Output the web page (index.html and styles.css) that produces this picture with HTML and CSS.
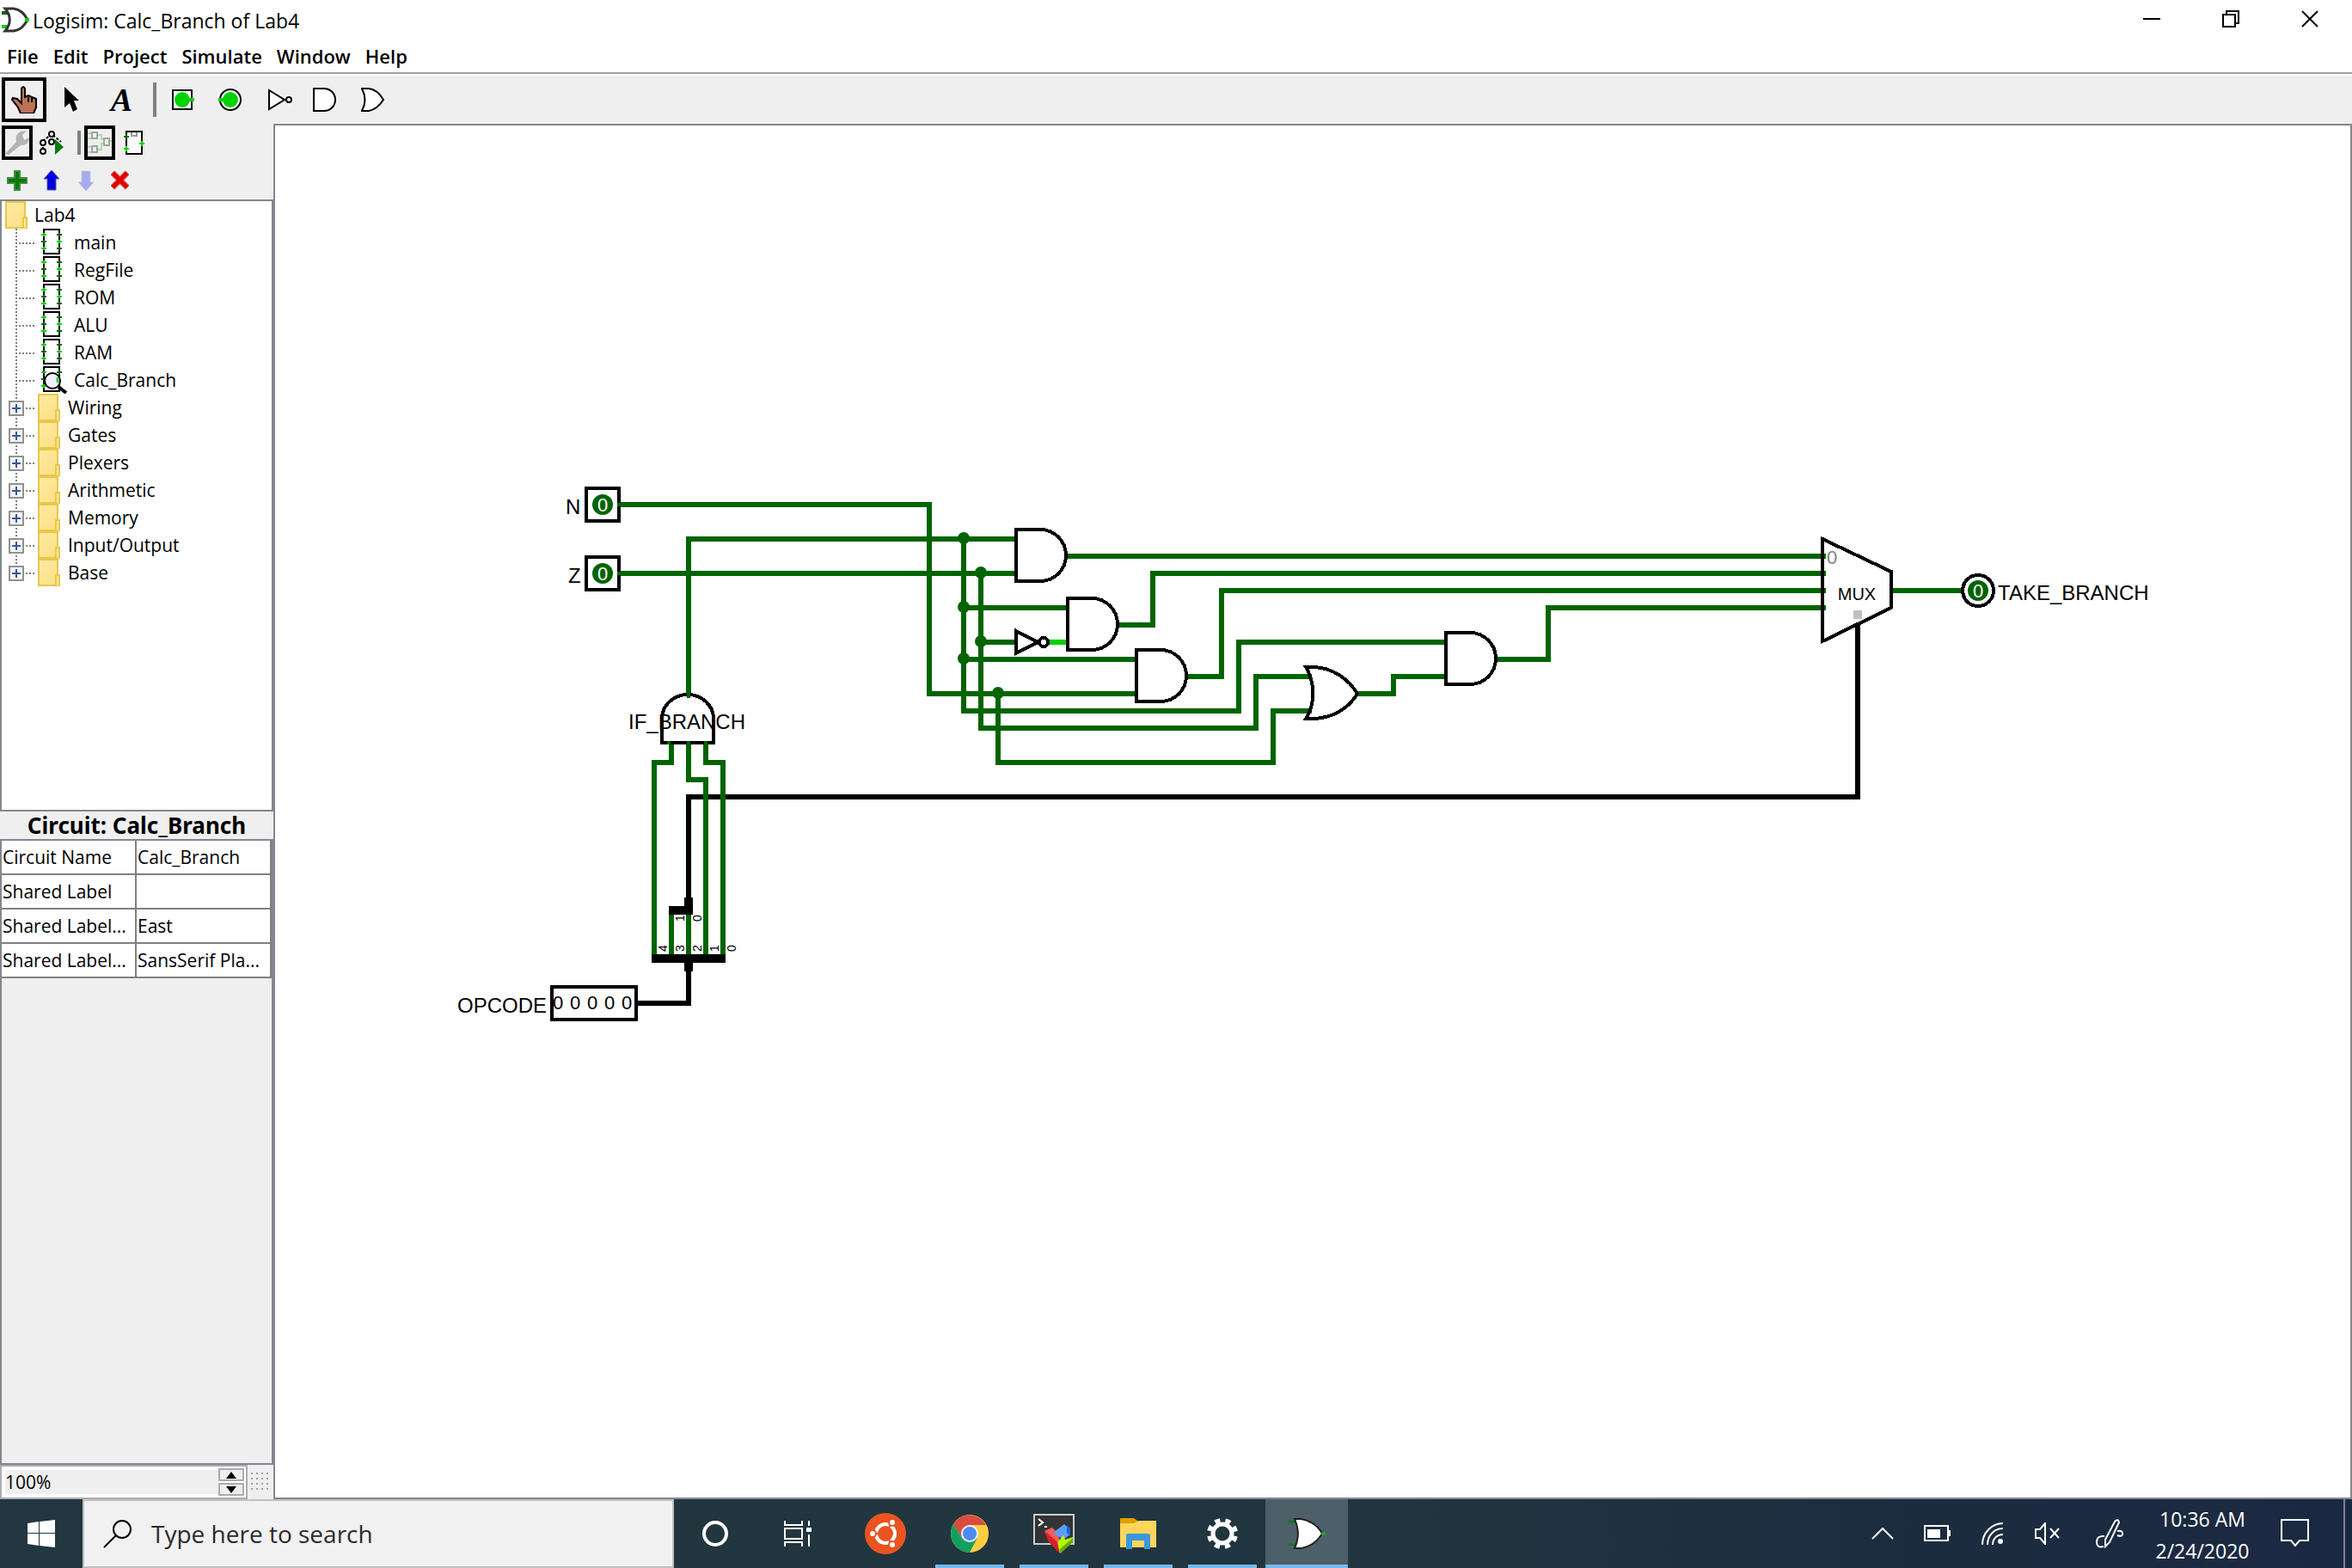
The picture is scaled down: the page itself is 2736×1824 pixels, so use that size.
FILE: index.html
```html
<!DOCTYPE html>
<html lang="en">
<head>
<meta charset="utf-8">
<title>Logisim: Calc_Branch of Lab4</title>
<link rel="stylesheet" href="styles.css">
</head>
<body>
<svg class="defs" aria-hidden="true">
  <defs>
    <linearGradient id="folder-fill" x1="0" y1="0" x2="1" y2="1">
      <stop offset="0" stop-color="#ffeaa5"/><stop offset="1" stop-color="#fcdf80"/>
    </linearGradient>
    <symbol id="leaf-line" viewBox="0 0 44 32">
      <path d="M19 0V32M22 17H41" fill="none" stroke="#808080" stroke-width="2" stroke-dasharray="2 2"/>
    </symbol>
    <symbol id="node-line" viewBox="0 0 44 32">
      <path d="M19 0V32M30 17H41" fill="none" stroke="#808080" stroke-width="2" stroke-dasharray="2 2"/>
      <path d="M11 9H27V25H11Z" fill="#f4f4f4" stroke="#919191" stroke-width="2"/>
      <path d="M14 17H24M19 12V22" stroke="#3a559b" stroke-width="2"/>
    </symbol>
    <symbol id="folder" viewBox="0 0 28 32">
      <path d="M1 1H23V19H25V31H1Z" fill="url(#folder-fill)" stroke="#e9c64b" stroke-width="2"/>
      <path d="M21 31V19H25V31" fill="#ffe79a" stroke="#e9c64b" stroke-width="2"/>
    </symbol>
    <symbol id="chip" viewBox="0 0 28 32">
      <path d="M7 1H25V29H7Z" fill="#fff" stroke="#000" stroke-width="2"/>
      <path d="M4 7H10M7 5V9M4 23H10M7 21V25M22 15H28M25 13V17" stroke="#00d200" stroke-width="2"/>
      <path d="M4 15H10M7 13V17M22 7H28M25 5V9M22 23H28M25 21V25" stroke="#006400" stroke-width="2"/>
    </symbol>
    <symbol id="chip-open" viewBox="0 0 36 32">
      <path d="M7 1H25V29H7Z" fill="#fff" stroke="#000" stroke-width="2"/>
      <path d="M4 7H10M4 23H10M7 21V25" stroke="#00d200" stroke-width="2"/>
      <path d="M4 15H10M22 7H28M25 5V9" stroke="#006400" stroke-width="2"/>
      <circle cx="17" cy="17" r="9" fill="#f0f0ff" stroke="#000" stroke-width="2"/>
      <path d="M23 13V19" stroke="#33c94f" stroke-width="3"/>
      <path d="M24 24L33 31" stroke="#000" stroke-width="4"/>
    </symbol>
    <path id="and-gate" d="M-31 -31h-28v60h28a30 30 0 0 0 0 -60z"/>
  </defs>
</svg>

<header class="titlebar">
  <svg class="app-icon" width="36" height="32" viewBox="0 0 36 32">
    <path d="M2 7H12" stroke="#006400" stroke-width="4"/><path d="M2 23H12" stroke="#00d200" stroke-width="4"/>
    <path d="M6 2H16C24 3 29 9 32 15C28 22 24 27 16 28H6C13 20 13 10 6 2Z" fill="#fff" stroke="#333" stroke-width="3"/>
    <path d="M29 15H34" stroke="#00d200" stroke-width="4"/>
  </svg>
  <h1 class="title">Logisim: Calc_Branch of Lab4</h1>
  <div class="window-buttons">
    <button class="window-button" aria-label="Minimize"><svg width="20" height="20"><path d="M0 10H20" stroke="#000" stroke-width="2"/></svg></button>
    <button class="window-button" aria-label="Restore"><svg width="20" height="20"><path d="M1 5H15V19H1ZM5 5V1H19V15H15" fill="none" stroke="#000" stroke-width="2"/></svg></button>
    <button class="window-button" aria-label="Close"><svg width="20" height="20"><path d="M1 1L19 19M19 1L1 19" stroke="#000" stroke-width="2"/></svg></button>
  </div>
</header>

<nav class="menubar">
  <button class="menu">File</button><button class="menu">Edit</button><button class="menu">Project</button><button class="menu">Simulate</button><button class="menu">Window</button><button class="menu">Help</button>
</nav>

<div class="toolbar" role="toolbar">
  <button class="tool selected" aria-label="Poke"><svg width="32" height="32">
    <path d="M3 14L8 15L13 20V3Q15 -1 17 3V13L21 11L25 13L30 15V25L27 32H12L9 25L2 16Z" fill="#bd7257" stroke="#000" stroke-width="2"/>
    <path d="M21 13V19M25 14V19" stroke="#000" stroke-width="2"/></svg></button>
  <button class="tool" aria-label="Edit"><svg width="32" height="32"><path d="M7 1L24 17H18L22 27L17 30L13 20L7 25Z" fill="#000" stroke="#fff" stroke-width="2" paint-order="stroke"/></svg></button>
  <button class="tool letter">A</button>
  <span class="divider"></span>
  <button class="tool" aria-label="Input pin"><svg width="32" height="32"><path d="M5 5H27V27H5Z" fill="#fff" stroke="#000" stroke-width="2"/><circle cx="16" cy="16" r="9" fill="#00d200"/><path d="M23 16H30" stroke="#00d200" stroke-width="4"/></svg></button>
  <button class="tool" aria-label="Output pin"><svg width="32" height="32"><circle cx="16" cy="16" r="12" fill="#fff" stroke="#000" stroke-width="2"/><circle cx="16" cy="16" r="9" fill="#00d200"/><path d="M2 16H9" stroke="#00d200" stroke-width="4"/></svg></button>
  <button class="tool" aria-label="NOT gate"><svg width="32" height="32"><path d="M5 5L23 16L5 27Z" fill="#fff" stroke="#000" stroke-width="2"/><circle cx="28" cy="16" r="3" fill="#fff" stroke="#000" stroke-width="2"/></svg></button>
  <button class="tool" aria-label="AND gate"><svg width="32" height="32"><path d="M1 3H13A13 13 0 0 1 13 29H1Z" fill="#fff" stroke="#000" stroke-width="2"/></svg></button>
  <button class="tool" aria-label="OR gate"><svg width="32" height="32"><path d="M1 3H9Q19 4 26 16Q19 27 9 29H1Q8 16 1 3Z" fill="#fff" stroke="#000" stroke-width="2"/></svg></button>
</div>

<main class="workspace">
  <aside class="sidebar">
    <div class="strip" role="toolbar">
      <button class="mini selected" aria-label="Show projects"><svg width="28" height="28"><path d="M0 27L13 13Q11 4 18 1L25 0L20 5L22 11L28 8Q28 17 18 17L4 28Z" fill="#b4b4b4"/></svg></button>
      <button class="mini" aria-label="Show simulation"><svg width="28" height="28"><path d="M4 12L14 4L25 13M14 5V12M4 14V22" fill="none" stroke="#000" stroke-width="2" stroke-dasharray="3 2"/><g fill="#fff" stroke="#000" stroke-width="2"><circle cx="14" cy="4" r="3"/><circle cx="4" cy="14" r="3"/><circle cx="14" cy="13" r="3"/><circle cx="4" cy="24" r="3"/></g><path d="M18 10L28 19L18 28Z" fill="#0a780a"/></svg></button>
      <span class="divider small"></span>
      <button class="mini selected" aria-label="Edit layout"><svg width="28" height="28"><path d="M0 3H6M0 9H6M0 19H6M0 25H6M12 5H16V10H20M12 22H16V15H20M26 12H28" fill="none" stroke="#a6dfa6" stroke-width="2"/><path d="M5 2H11V9H5ZM5 18H11V25H5ZM19 9H25V17H19Z" fill="#efefef" stroke="#a3a3a3" stroke-width="2"/></svg></button>
      <button class="mini" aria-label="Edit appearance"><svg width="28" height="28"><path d="M5 1H23V27H5Z" fill="#fff" stroke="#000" stroke-width="2"/><path d="M11 2V6H17V2" fill="none" stroke="#999" stroke-width="2"/><path d="M2 7H8M5 5V9" stroke="#006400" stroke-width="2"/><path d="M2 21H8M5 18V24M20 15H26M23 12V18" stroke="#00d200" stroke-width="2"/></svg></button>
    </div>
    <div class="strip" role="toolbar">
      <button class="mini" aria-label="Add circuit"><svg width="24" height="24"><path d="M9 1H15V9H23V15H15V23H9V15H1V9H9Z" fill="#0a780a" stroke="#3f8c3f" stroke-width="2"/></svg></button>
      <button class="mini" aria-label="Move up"><svg width="24" height="24"><path d="M12 0L21 10H17V23H7V10H3Z" fill="#0000e0" stroke="#5656a8"/></svg></button>
      <button class="mini" aria-label="Move down"><svg width="24" height="24"><path d="M12 24L21 14H17V1H7V14H3Z" fill="#a8a8ee" stroke="#c8c8e0"/></svg></button>
      <button class="mini" aria-label="Remove circuit"><svg width="24" height="24"><path d="M3 3L20 20M20 3L3 20" stroke="#d66" stroke-width="7"/><path d="M3 3L20 20M20 3L3 20" stroke="#e00000" stroke-width="5"/></svg></button>
    </div>

    <section class="tree">
      <div class="node root"><svg width="28" height="32"><use href="#folder"/></svg><span class="root-name">Lab4</span></div>
      <ul class="branch">
        <li class="node"><svg width="44" height="32"><use href="#leaf-line"/></svg><svg width="28" height="32"><use href="#chip"/></svg><span class="circuit">main</span></li>
        <li class="node"><svg width="44" height="32"><use href="#leaf-line"/></svg><svg width="28" height="32"><use href="#chip"/></svg><span class="circuit">RegFile</span></li>
        <li class="node"><svg width="44" height="32"><use href="#leaf-line"/></svg><svg width="28" height="32"><use href="#chip"/></svg><span class="circuit">ROM</span></li>
        <li class="node"><svg width="44" height="32"><use href="#leaf-line"/></svg><svg width="28" height="32"><use href="#chip"/></svg><span class="circuit">ALU</span></li>
        <li class="node"><svg width="44" height="32"><use href="#leaf-line"/></svg><svg width="28" height="32"><use href="#chip"/></svg><span class="circuit">RAM</span></li>
        <li class="node"><svg width="44" height="32"><use href="#leaf-line"/></svg><svg class="open" width="28" height="32"><use href="#chip-open" width="36" height="32"/></svg><span class="circuit">Calc_Branch</span></li>
        <li class="node"><button class="expander" aria-label="Expand Wiring"><svg width="44" height="32"><use href="#node-line"/></svg></button><svg width="28" height="32"><use href="#folder"/></svg><span class="library">Wiring</span></li>
        <li class="node"><button class="expander" aria-label="Expand Gates"><svg width="44" height="32"><use href="#node-line"/></svg></button><svg width="28" height="32"><use href="#folder"/></svg><span class="library">Gates</span></li>
        <li class="node"><button class="expander" aria-label="Expand Plexers"><svg width="44" height="32"><use href="#node-line"/></svg></button><svg width="28" height="32"><use href="#folder"/></svg><span class="library">Plexers</span></li>
        <li class="node"><button class="expander" aria-label="Expand Arithmetic"><svg width="44" height="32"><use href="#node-line"/></svg></button><svg width="28" height="32"><use href="#folder"/></svg><span class="library">Arithmetic</span></li>
        <li class="node"><button class="expander" aria-label="Expand Memory"><svg width="44" height="32"><use href="#node-line"/></svg></button><svg width="28" height="32"><use href="#folder"/></svg><span class="library">Memory</span></li>
        <li class="node"><button class="expander" aria-label="Expand Input/Output"><svg width="44" height="32"><use href="#node-line"/></svg></button><svg width="28" height="32"><use href="#folder"/></svg><span class="library">Input/Output</span></li>
        <li class="node"><button class="expander last" aria-label="Expand Base"><svg width="44" height="32"><use href="#node-line"/></svg></button><svg width="28" height="32"><use href="#folder"/></svg><span class="library">Base</span></li>
      </ul>
    </section>

    <section class="attributes">
      <h2 class="attributes-title">Circuit: Calc_Branch</h2>
      <div class="attributes-body">
        <table class="attribute-table">
          <tr><th scope="row">Circuit Name</th><td>Calc_Branch</td></tr>
          <tr><th scope="row">Shared Label</th><td></td></tr>
          <tr><th scope="row">Shared Label...</th><td>East</td></tr>
          <tr><th scope="row">Shared Label...</th><td>SansSerif Pla...</td></tr>
        </table>
      </div>
    </section>

    <div class="zoombar">
      <div class="spinner">
        <input class="zoom" type="text" value="100%" aria-label="Zoom">
        <div class="steps">
          <button class="step" aria-label="Zoom in"><svg width="12" height="8"><path d="M6 0L12 8H0Z"/></svg></button>
          <button class="step" aria-label="Zoom out"><svg width="12" height="8"><path d="M6 8L12 0H0Z"/></svg></button>
        </div>
      </div>
      <button class="grid-toggle" aria-label="Toggle grid"><svg width="22" height="22"><path d="M0 1H22M0 7H22M0 13H22M0 19H22" stroke="#a0a0a0" stroke-width="2" stroke-dasharray="2 4"/></svg></button>
    </div>
  </aside>

  <section class="canvas">
    <svg class="circuit-diagram" viewBox="320 146 2414 1596" preserveAspectRatio="xMinYMin meet">
      <g class="wires">
        <path d="M720 587H1081V807H1322"/>
        <path d="M801 808V627H1182"/>
        <path d="M720 667H1182"/>
        <path d="M1121 627V827H1441V747H1682"/>
        <path d="M1141 667V847H1461V787H1526"/>
        <path d="M1161 807V887H1481V827H1526"/>
        <path d="M1121 707H1242M1141 747H1182M1121 767H1322"/>
        <path d="M1239 647H2124"/>
        <path d="M1299 727H1341V667H2124"/>
        <path d="M1379 787H1421V687H2124"/>
        <path d="M1579 807H1621V787H1682"/>
        <path d="M1739 767H1801V707H2124"/>
        <path d="M2198 687H2282"/>
      </g>
      <g class="bus">
        <path d="M2161 725V927H801V1046"/>
        <path d="M801 1128V1167H742"/>
      </g>
      <g class="wires">
        <path d="M781 864V887H761V1112"/>
        <path d="M801 864V907H821V1112"/>
        <path d="M821 864V887H841V1112"/>
        <path d="M781 1062V1112M801 1062V1112"/>
      </g>
      <path class="live" d="M1217 747H1242"/>
      <g class="splitters">
        <path d="M758 1110H844V1120H806V1130H796V1120H758Z"/>
        <path d="M778 1054H796V1044H806V1064H778Z"/>
      </g>
      <g class="joints">
        <circle cx="1121" cy="626" r="7"/><circle cx="1141" cy="666" r="7"/><circle cx="1121" cy="706" r="7"/>
        <circle cx="1141" cy="746" r="7"/><circle cx="1121" cy="766" r="7"/><circle cx="1161" cy="806" r="7"/>
      </g>
      <g class="outline">
        <use href="#and-gate" x="1241" y="647"/>
        <use href="#and-gate" x="1301" y="727"/>
        <use href="#and-gate" x="1381" y="787"/>
        <use href="#and-gate" x="1741" y="767"/>
        <path d="M770 836V864H830V836A30 28 0 0 0 770 836Z"/>
        <path d="M1182 734L1207 747L1182 760Z"/>
        <circle cx="1214" cy="747" r="5"/>
        <path d="M1519 776H1526C1552 776 1570 792 1579 807C1570 822 1552 836 1526 836H1519C1530 820 1530 794 1519 776Z"/>
        <path d="M2120 627L2200 665V707L2120 746Z"/>
        <path d="M682 568H720V606H682ZM682 648H720V686H682ZM642 1148H740V1186H642Z"/>
        <circle cx="2301" cy="687" r="18"/>
      </g>
      <g class="ports">
        <path d="M778 866V862M801 866V862M821 866V862M801 812V806M718 587H724M718 667H724"/>
        <circle cx="701" cy="587" r="12"/><circle cx="701" cy="667" r="12"/><circle cx="2301" cy="687" r="12"/>
      </g>
      <path d="M2156 710H2166V720H2156Z" fill="#c0c0c0"/>
      <g class="labels">
        <text x="658" y="598">N</text>
        <text x="661" y="678">Z</text>
        <text x="731" y="848">IF_BRANCH</text>
        <text x="532" y="1178">OPCODE</text>
        <text x="2324" y="698">TAKE_BRANCH</text>
      </g>
      <text class="part-name" x="2160" y="698">MUX</text>
      <g class="values">
        <text x="649" y="1174">0</text><text x="669" y="1174">0</text><text x="689" y="1174">0</text><text x="709" y="1174">0</text><text x="729" y="1174">0</text>
        <text class="faint" x="2131" y="656">0</text>
        <text class="bit" x="701" y="595">0</text><text class="bit" x="701" y="675">0</text><text class="bit" x="2301" y="695">0</text>
      </g>
      <g class="bit-labels">
        <text transform="translate(776 1107) rotate(-90)">4</text>
        <text transform="translate(796 1107) rotate(-90)">3</text>
        <text transform="translate(816 1107) rotate(-90)">2</text>
        <text transform="translate(836 1107) rotate(-90)">1</text>
        <text transform="translate(856 1107) rotate(-90)">0</text>
        <text transform="translate(796 1072) rotate(-90)">1</text>
        <text transform="translate(816 1072) rotate(-90)">0</text>
      </g>
    </svg>
  </section>
</main>

<footer class="taskbar">
  <button class="start" aria-label="Start"><svg width="32" height="32"><path d="M0 4L13 2V15H0ZM14 2L32 0V15H14ZM0 16H13V30L0 28ZM14 16H32V32L14 30Z" fill="#fff"/></svg></button>
  <label class="search">
    <svg width="34" height="34"><circle cx="22" cy="12" r="10" fill="none" stroke="#000" stroke-width="2"/><path d="M15 19L1 33" stroke="#000" stroke-width="2"/></svg>
    <input class="search-box" type="text" placeholder="Type here to search" aria-label="Search">
  </label>
  <button class="task" aria-label="Cortana"><svg width="32" height="32"><circle cx="16" cy="16" r="13" fill="none" stroke="#fff" stroke-width="4"/></svg></button>
  <button class="task" aria-label="Task view"><svg width="32" height="32"><path d="M1 1V6H21V1M1 31V26H21V31M1 10H21V22H1ZM29 1V7M29 17V31" fill="none" stroke="#fff" stroke-width="2"/><path d="M26 9H32V14H26Z" fill="#fff"/></svg></button>
  <div class="apps">
    <button class="task" aria-label="Ubuntu"><svg width="48" height="48" viewBox="-24 -24 48 48"><circle r="24" fill="#e95420"/><circle r="11" fill="none" stroke="#fff" stroke-width="4"/><path d="M0 0L-18 0M0 0L9 -16M0 0L9 16" stroke="#e95420" stroke-width="2"/><g fill="#fff" stroke="#e95420" stroke-width="2"><circle cx="-15" r="4"/><circle cx="8" cy="-13" r="4"/><circle cx="8" cy="13" r="4"/></g></svg></button>
    <button class="task running" aria-label="Google Chrome"><svg width="44" height="44" viewBox="-22 -22 44 44"><circle r="22" fill="#ffcd40"/><path d="M-19 -11A22 22 0 0 1 19 -10H0L-9 5Z" fill="#db4c3f"/><path d="M-19 -11L-9 5L0 10L9 5L0 22A22 22 0 0 1 -19 -11Z" fill="#13a05f"/><circle r="10" fill="#f1f1f1"/><circle r="8" fill="#4a8af4"/></svg></button>
    <button class="task running" aria-label="MobaXterm"><svg width="48" height="48"><path d="M1 2H47V36H1Z" fill="#333" stroke="#ccc" stroke-width="2"/><path d="M6 7L11 11L6 15M13 16H16" fill="none" stroke="#fff" stroke-width="2"/><path d="M13 22L22 18L31 40V47L18 34Z" fill="#d81f2a"/><path d="M13 21L22 17L29 24L31 36Z" fill="#ff5a5a"/><path d="M23 23L36 13L43 19V25L35 31Z" fill="#5c9dff"/><path d="M39 14L43 18V27L39 23Z" fill="#1464e0"/><path d="M28 34L35 26L37 31L46 28V34L31 47Z" fill="#b4f800"/><path d="M31 42L46 29V34L31 47Z" fill="#5fae00"/></svg></button>
    <button class="task running" aria-label="File Explorer"><svg width="44" height="36"><path d="M1 0H17L21 3V9H1Z" fill="#e0a000"/><path d="M1 6H17L22 3H43V34H1Z" fill="#ffd55c"/><path d="M8 36V20Q8 18 10 18H34Q36 18 36 20V36H29V26H15V36Z" fill="#3a97dd"/></svg></button>
    <button class="task running" aria-label="Settings"><svg width="40" height="40" viewBox="-20 -20 40 40"><circle r="11" fill="none" stroke="#fff" stroke-width="5"/><circle r="15" fill="none" stroke="#fff" stroke-width="6" stroke-dasharray="5.9 5.88" transform="rotate(11)"/></svg></button>
    <button class="task active" aria-label="Logisim"><svg width="44" height="36"><path d="M1 4H10M1 31H10" stroke="#0b7a1a" stroke-width="3"/><path d="M8 1H16C27 3 36 10 40 18C35 26 27 33 16 35H8C13 24 13 12 8 1Z" fill="#fff" stroke="#222" stroke-width="2"/><path d="M39 18H44" stroke="#1fae2a" stroke-width="3"/></svg></button>
  </div>
  <div class="tray">
    <button class="tray-button" aria-label="Show hidden icons"><svg width="26" height="14"><path d="M1 13L13 1L25 13" fill="none" stroke="#fff" stroke-width="2"/></svg></button>
    <button class="tray-button" aria-label="Battery"><svg width="32" height="20"><path d="M1 1H28V18H1Z" fill="none" stroke="#fff" stroke-width="2"/><path d="M4 5H19V15H4ZM28 6H31V13H28Z" fill="#fff"/></svg></button>
    <button class="tray-button" aria-label="Network"><svg width="26" height="26"><g fill="none" stroke="#fff" stroke-width="2"><path d="M1 26C1 12 12 1 25 1M7 26C7 15 15 7 25 7M13 26C13 19 18 14 25 14"/></g><circle cx="22" cy="22" r="3" fill="#fff"/></svg></button>
    <button class="tray-button" aria-label="Volume"><svg width="30" height="26"><path d="M1 8H6L12 1V25L6 18H1ZM18 7L28 18M28 7L18 18" fill="none" stroke="#fff" stroke-width="2"/></svg></button>
    <button class="tray-button pen" aria-label="Windows Ink"><svg width="32" height="34"><path d="M10 20Q1 19 1 27Q1 34 9 32M25 14Q32 13 31 18Q30 21 25 19M11 32V24L22 3Q26 -1 27 4L16 27Z" fill="none" stroke="#fff" stroke-width="2"/></svg></button>
    <div class="clock"><time>10:36 AM</time><time>2/24/2020</time></div>
    <button class="tray-button notice" aria-label="Notifications"><svg width="34" height="34"><path d="M1 1H32V25H22L17 31L12 25H1Z" fill="none" stroke="#fff" stroke-width="2"/></svg></button>
    <button class="show-desktop" aria-label="Show desktop"></button>
  </div>
</footer>
</body>
</html>
```
FILE: styles.css
```css
* {
  box-sizing: border-box;
}

body {
  margin: 0;
  height: 100vh;
  display: flex;
  flex-direction: column;
  background: #fff;
  color: #000;
  font: 21px/32px "Open Sans", "Noto Sans", sans-serif;
}

button {
  margin: 0;
  padding: 0;
  border: 0;
  background: none;
  color: inherit;
  font: inherit;
}

svg {
  display: block;
  flex: none;
}

.defs {
  position: absolute;
  width: 0;
  height: 0;
}

/* Title and menus */
.titlebar {
  flex: none;
  display: flex;
  height: 50px;
}

.app-icon {
  margin-top: 8px;
}

.title {
  margin: 0;
  padding-left: 2px;
  font-size: 23px;
  font-weight: 400;
  line-height: 48px;
}

.window-buttons {
  display: flex;
  height: 44px;
  margin-left: auto;
  padding-right: 3px;
}

.window-button {
  display: grid;
  place-items: center;
  width: 92px;
}

.menubar {
  flex: none;
  display: flex;
  align-items: flex-start;
  gap: 17px;
  height: 36px;
  padding-left: 8px;
  border-bottom: 2px solid #a0a0a0;
}

.menu {
  font-size: 22px;
  font-weight: 600;
  line-height: 30px;
}

/* Tool buttons */
.toolbar {
  flex: none;
  display: flex;
  height: 58px;
  border-top: 2px solid #fff;
  background: #efefef;
}

.tool {
  display: grid;
  place-items: center;
  width: 56px;
  height: 56px;
  border: 4px solid transparent;
}

.tool.selected,
.mini.selected {
  margin: 2px;
  border: 4px solid #000;
}

.tool.selected {
  width: 52px;
  height: 52px;
}

.letter {
  padding-left: 3px;
  font: italic bold 38px/48px "Liberation Serif", serif;
}

.divider {
  width: 4px;
  height: 40px;
  margin: 8px 2px 8px 10px;
  background: #808080;
}

.divider.small {
  height: 28px;
}

/* Workspace */
.workspace {
  flex: 1;
  display: flex;
  min-height: 0;
}

.sidebar {
  flex: none;
  display: flex;
  flex-direction: column;
  width: 318px;
  background: #efefef;
}

.strip {
  flex: none;
  display: flex;
  height: 44px;
}

.mini {
  display: grid;
  place-items: center;
  width: 40px;
  height: 44px;
}

.mini.selected {
  width: 36px;
  height: 40px;
}

.tree {
  flex: 708 1 0;
  border: 2px solid #828790;
  background: #fff;
}

.branch {
  margin: 0 0 0 -2px;
  padding: 0;
  list-style: none;
}

.node {
  display: flex;
  height: 32px;
}

.root {
  padding-left: 4px;
}

.root-name {
  margin-left: 6px;
}

.open {
  overflow: visible;
}

.circuit {
  margin-left: 14px;
}

.library {
  margin-left: 7px;
}

.last {
  height: 26px;
  overflow: hidden;
}

.attributes {
  flex: 760 1 0;
  display: flex;
  flex-direction: column;
}

.attributes-title {
  margin: 0;
  font: bold 26px/32px "Noto Sans", sans-serif;
  text-align: center;
}

.attributes-body {
  flex: 1;
  border: 2px solid #828790;
}

.attribute-table {
  width: 100%;
  table-layout: fixed;
  border-collapse: separate;
  border-spacing: 0;
  background: #fff;
}

.attribute-table th,
.attribute-table td {
  height: 40px;
  padding: 0 0 0 1px;
  border-right: 2px solid #808080;
  border-bottom: 2px solid #808080;
  font-weight: 400;
  line-height: 36px;
  text-align: left;
  white-space: nowrap;
}

.zoombar {
  flex: none;
  display: flex;
  height: 40px;
}

.spinner {
  display: flex;
  flex: 1;
  min-width: 0;
  padding: 4px 2px 4px 4px;
  border: 2px solid #abadb3;
  background: #fff;
}

.zoom {
  flex: 1;
  min-width: 0;
  padding: 0;
  border: 0;
  background: #efefef;
  font: inherit;
}

.steps {
  display: flex;
  flex-direction: column;
  gap: 2px;
  margin: -2px 0;
}

.step {
  flex: 1;
  display: grid;
  place-items: center;
  width: 30px;
  border: 2px solid #acacac;
  background: #efefef;
}

.grid-toggle {
  display: grid;
  place-items: center;
  width: 30px;
}

.canvas {
  flex: 1;
  min-width: 0;
  min-height: 0;
  border: 2px solid #828790;
}

.circuit-diagram {
  width: 100%;
  height: 100%;
}

.wires,
.bus,
.outline,
.live {
  fill: none;
  shape-rendering: crispEdges;
}

.wires {
  stroke: #006400;
  stroke-width: 6px;
}

.bus {
  stroke: #000;
  stroke-width: 6px;
}

.live {
  stroke: #00d200;
  stroke-width: 6px;
}

.outline {
  stroke: #000;
  stroke-width: 4px;
}

.joints,
.ports {
  fill: #006400;
}

.ports {
  stroke: #006400;
  stroke-width: 4px;
}

.ports circle {
  stroke: none;
}

.labels {
  font: 24px "Liberation Sans", Arial, sans-serif;
}

.part-name {
  font: 20px "Liberation Sans", Arial, sans-serif;
  text-anchor: middle;
}

.values {
  font: 22px "Liberation Sans", Arial, sans-serif;
  text-anchor: middle;
}

.faint {
  fill: #808080;
}

.bit {
  fill: #fff;
}

.bit-labels {
  font: 14px "Liberation Sans", Arial, sans-serif;
}

/* Taskbar */
.taskbar {
  flex: none;
  display: flex;
  height: 80px;
  background: linear-gradient(90deg, #22373f 0%, #20353f 60%, #1c2c40 82%, #1b2842 100%);
  color: #fff;
}

.start {
  display: grid;
  place-items: center;
  width: 96px;
}

.search {
  display: flex;
  align-items: center;
  gap: 22px;
  width: 688px;
  padding: 0 22px;
  border: 2px solid #c0c0c0;
  background: #f1f1f1;
}

.search-box {
  flex: 1;
  min-width: 0;
  padding: 0;
  border: 0;
  background: none;
  font: 28px/40px "Open Sans", "Noto Sans", sans-serif;
}

.search-box::placeholder {
  color: #2b2b2b;
  opacity: 1;
}

.task {
  display: grid;
  place-items: center;
  width: 96px;
  height: 80px;
}

.apps {
  display: flex;
  gap: 2px;
  padding-left: 6px;
}

.running {
  background: linear-gradient(#76b9ed, #76b9ed) center bottom / 80px 4px no-repeat;
}

.active {
  background: linear-gradient(#76b9ed, #76b9ed) center bottom / 96px 4px no-repeat #4d5f69;
}

.tray {
  display: flex;
  align-items: stretch;
  margin-left: auto;
}

.tray-button {
  display: grid;
  place-items: center;
  width: 64px;
}

.pen {
  width: 80px;
}

.clock {
  display: flex;
  flex-direction: column;
  justify-content: center;
  width: 136px;
  padding-top: 4px;
  font-size: 23px;
  line-height: 37px;
  text-align: center;
}

.notice {
  width: 80px;
}

.show-desktop {
  width: 10px;
  margin-left: 16px;
  border-left: 2px solid #7b828f;
}
```
